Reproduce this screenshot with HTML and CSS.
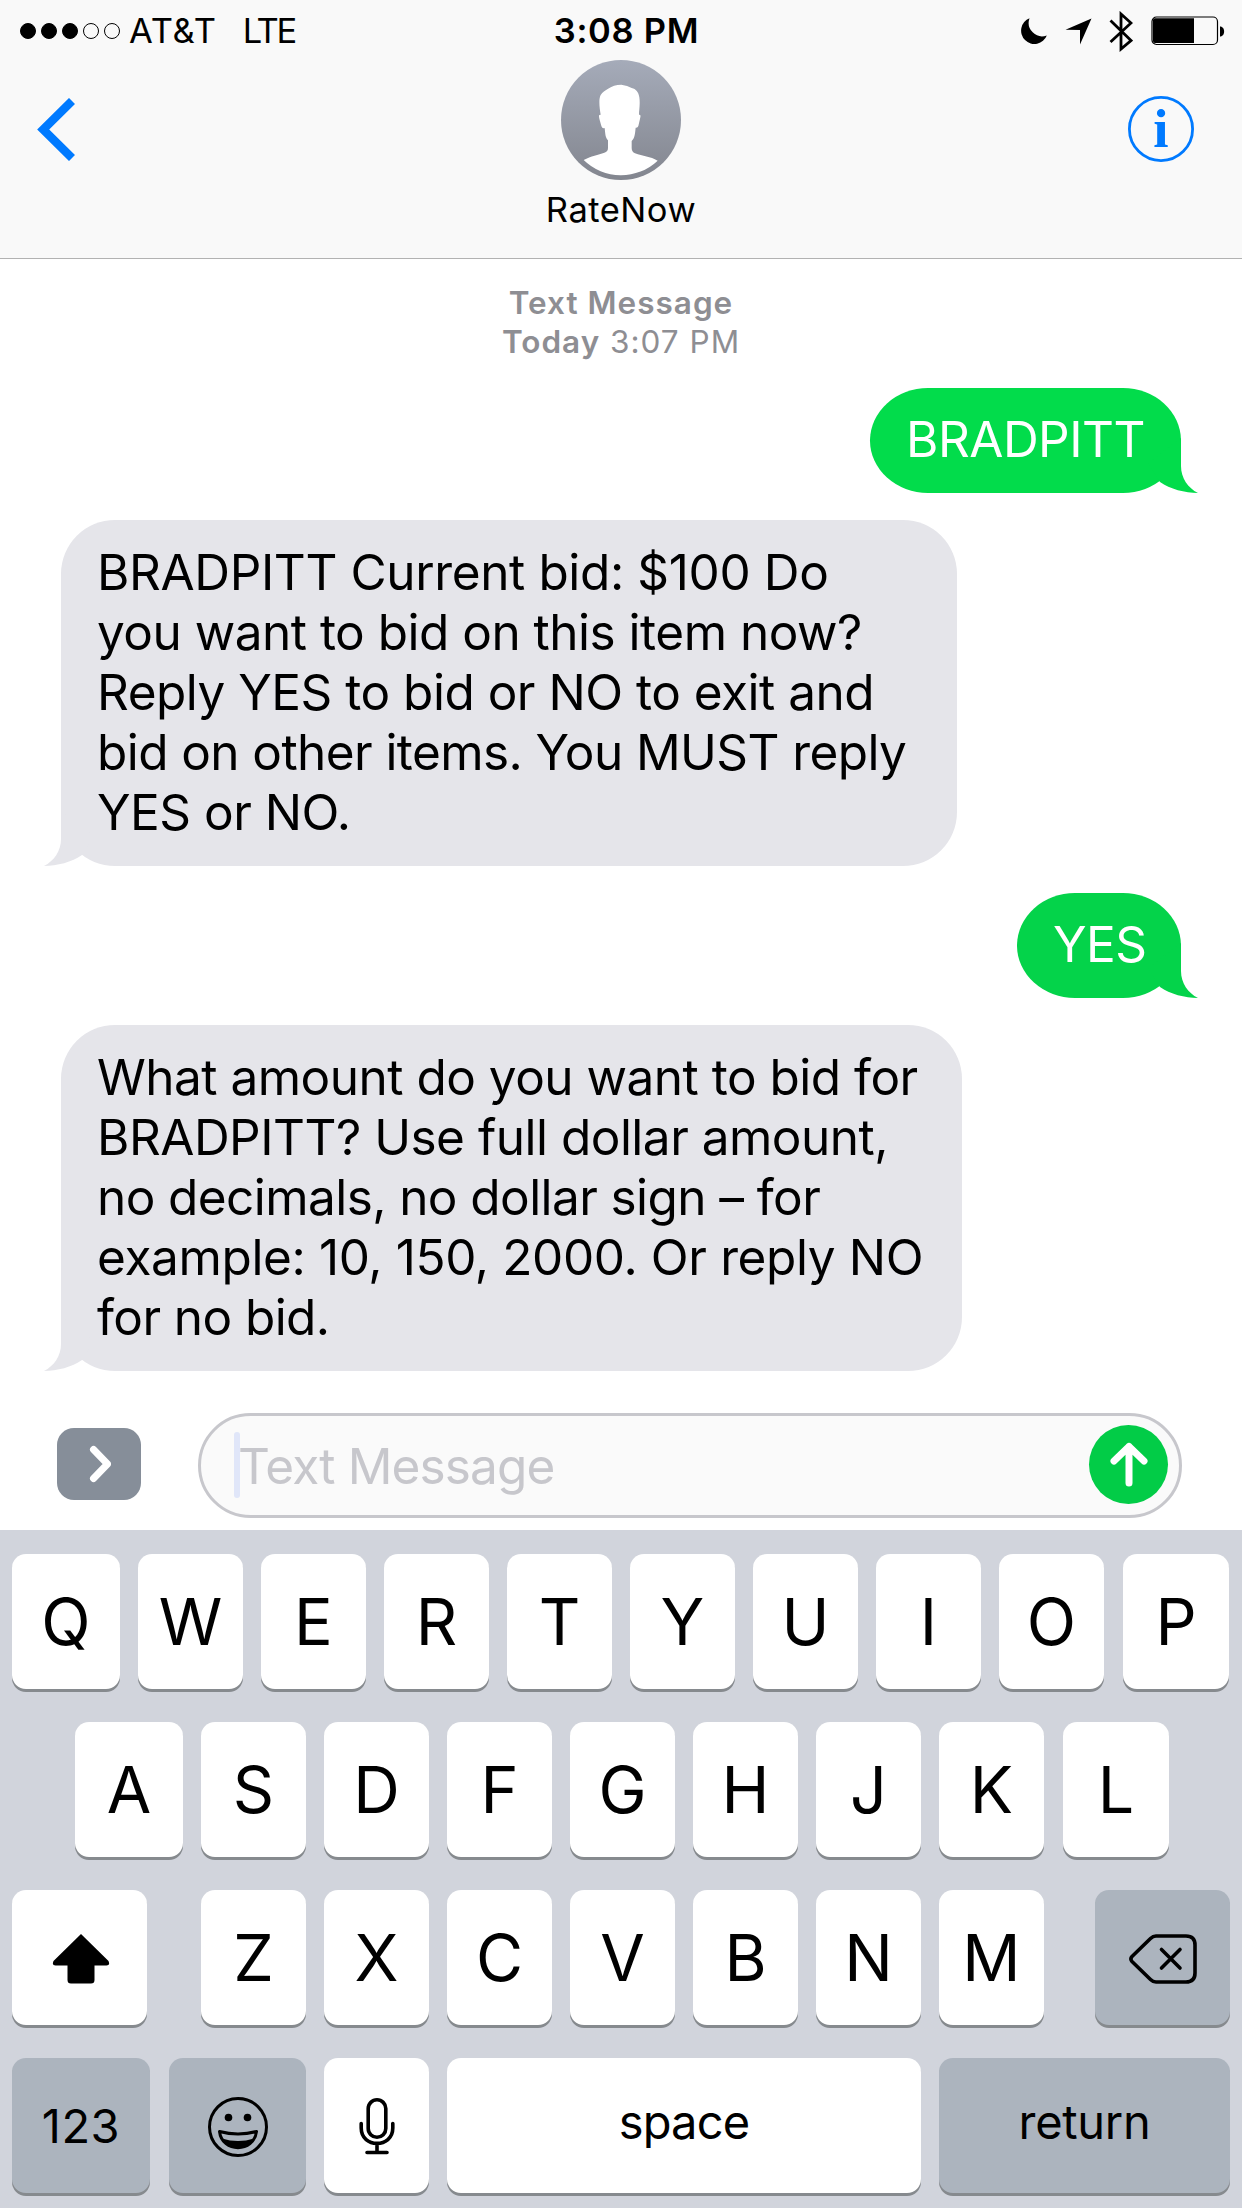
FILE: index.html
```html
<!doctype html>
<html lang="en">

<head>
  <title>RateNow</title>
  <meta charset="utf-8">
  <meta name="viewport" content="width=device-width, initial-scale=1">
  <link rel="stylesheet" href="styles.css">
</head>

<body>
  <header class="header">
    <div class="status-bar">
      <div class="status-left">
        <div class="signal"><i class="dot full"></i><i class="dot full"></i><i class="dot full"></i><i class="dot"></i><i class="dot"></i></div>
        <span class="carrier">AT&amp;T</span>
        <span class="network">LTE</span>
      </div>
      <span class="clock">3:08 PM</span>
      <div class="status-right">
        <svg class="moon" width="27" height="27" viewBox="0 0 27 27"><path d="M9.500 .3A13.300 13.300 0 1 0 26.800 17.500A13.500 13.500 0 0 1 9.500 .3Z"/></svg>
        <svg class="location" width="27" height="27" viewBox="0 0 27 27"><path d="M26.500 .5L15 26.500V12L.5 11.700Z"/></svg>
        <svg class="bluetooth" width="24" height="41" viewBox="0 0 24 41"><path d="M1.500 9.500L22 29.500L12 38V3L22 12L1.500 31"/></svg>
        <svg class="battery" width="74" height="30" viewBox="0 0 74 30">
          <rect x="1" y="1" width="65.500" height="27.500" rx="4.500" fill="none" stroke="#000" stroke-width="1.200"/>
          <path d="M4 2.300H43V27H4Q2 27 2 25V4.300Q2 2.300 4 2.300Z"/>
          <path d="M69 10.500C74.500 10.500 74.500 20.500 69 20.500Z"/>
        </svg>
      </div>
    </div>
    <div class="nav">
      <svg class="back" width="38" height="63" viewBox="0 0 38 63"><path d="M35 3L6.200 31.500L35 60"/></svg>
      <div class="contact">
        <svg class="avatar" width="120" height="120" viewBox="0 0 360 360">
          <defs>
            <linearGradient id="avatarFill" x1="0" y1="0" x2="0" y2="1">
              <stop offset="0" stop-color="#a5abb9"/>
              <stop offset="1" stop-color="#83868f"/>
            </linearGradient>
          </defs>
          <circle cx="180" cy="180" r="180" fill="url(#avatarFill)"/>
          <path fill="#fff" d="M68 300C90 288 112 285 130 278Q141 275 141 264V241C133 233 133 222 131 204Q123 207 120 194C116 180 112 168 115 165L119 164C116 145 112 118 119 105C125 95 132 93 140 87Q158 74 181 74Q200 76 212 84C225 87 232 95 235 112C238 132 234 150 234 164Q240 163 238 172C236 182 234 190 232 198Q230 204 224 203C222 220 222 233 212 243V264Q212 276 222 280C245 288 268 290 290 302A160 160 0 0 1 68 300Z"/>
        </svg>
        <span class="contact-name">RateNow</span>
      </div>
      <svg class="info" width="66" height="66" viewBox="0 0 66 66">
        <circle cx="33" cy="33" r="31.600"/>
        <text x="33" y="51" text-anchor="middle">i</text>
      </svg>
    </div>
  </header>

  <main class="thread">
    <div class="meta"><b>Text Message</b><br><b>Today</b> 3:07 PM</div>

    <div class="bubble sent">
      BRADPITT
      <svg class="tail" width="50" height="50" viewBox="0 0 50 50"><path d="M33 -5V23C33 35 40 45 50 50C37 50 22 46 12 39L0 20Z"/></svg>
    </div>

    <div class="bubble received">
      <span class="loose">BRADPITT Current bid: $100 Do</span><br>
      you want to bid on this item now?<br>
      Reply YES to bid or NO to exit and<br>
      <span class="tight">bid on other items. You MUST reply</span><br>
      YES or NO.
      <svg class="tail" width="50" height="50" viewBox="0 0 50 50"><path d="M33 -5V23C33 35 40 45 50 50C37 50 22 46 12 39L0 20Z"/></svg>
    </div>

    <div class="bubble sent latest">
      YES
      <svg class="tail" width="50" height="50" viewBox="0 0 50 50"><path d="M33 -5V23C33 35 40 45 50 50C37 50 22 46 12 39L0 20Z"/></svg>
    </div>

    <div class="bubble received wide">
      What amount do you want to bid for<br>
      BRADPITT? Use full dollar amount,<br>
      <span class="tight">no decimals, no dollar sign – for</span><br>
      <span class="loose">example: 10, 150, 2000. Or reply NO</span><br>
      <span class="tight">for no bid.</span>
      <svg class="tail" width="50" height="50" viewBox="0 0 50 50"><path d="M33 -5V23C33 35 40 45 50 50C37 50 22 46 12 39L0 20Z"/></svg>
    </div>
  </main>

  <div class="compose">
    <div class="apps">
      <svg width="22" height="40" viewBox="0 0 22 40"><path d="M4.500 5.500L18.500 20L4.500 34.500"/></svg>
    </div>
    <div class="field">
      <i class="caret"></i>
      <span class="placeholder">Text Message</span>
      <div class="send">
        <svg width="40" height="46" viewBox="0 0 40 46"><path d="M20 4.500V41M5 19L20 4.500L35 19"/></svg>
      </div>
    </div>
  </div>

  <div class="keyboard">
    <div class="row">
      <div class="key edge">Q</div>
      <div class="key">W</div>
      <div class="key">E</div>
      <div class="key">R</div>
      <div class="key">T</div>
      <div class="key">Y</div>
      <div class="key">U</div>
      <div class="key">I</div>
      <div class="key">O</div>
      <div class="key edge">P</div>
    </div>
    <div class="row inset">
      <div class="key edge">A</div>
      <div class="key">S</div>
      <div class="key">D</div>
      <div class="key">F</div>
      <div class="key">G</div>
      <div class="key">H</div>
      <div class="key">J</div>
      <div class="key">K</div>
      <div class="key edge">L</div>
    </div>
    <div class="row">
      <div class="key shift">
        <svg width="58" height="50" viewBox="0 0 58 50"><path d="M29 0L56.500 27Q58.500 31.500 54.500 31.500H42.500V46Q42.500 49.500 39 49.500H19Q15.500 49.500 15.500 46V31.500H3.500Q-.5 31.500 1.500 27Z"/></svg>
      </div>
      <div class="key">Z</div>
      <div class="key">X</div>
      <div class="key">C</div>
      <div class="key">V</div>
      <div class="key">B</div>
      <div class="key">N</div>
      <div class="key">M</div>
      <div class="key dark delete">
        <svg width="68" height="50" viewBox="0 0 68 50"><path d="M27 2H57Q66 2 66 11V39Q66 48 57 48H27Q24 48 21.500 45.500L3 27.500Q.8 25 3 22.500L21.500 4.500Q24 2 27 2Z"/><path d="M32.500 15.500L51 34M51 15.500L32.500 34"/></svg>
      </div>
    </div>
    <div class="row">
      <div class="key dark numbers">123</div>
      <div class="key dark emoji">
        <svg width="60" height="60" viewBox="0 0 60 60">
          <circle cx="30" cy="30" r="28.500"/>
          <circle class="eye" cx="20.500" cy="20.500" r="3.800"/>
          <circle class="eye" cx="39.500" cy="20.500" r="3.800"/>
          <path d="M11.500 34.500Q30 39.500 48.500 34.500C46 56 14 56 11.500 34.500Z"/>
          <path class="mouth" d="M14 41.500Q30 46.500 46 41.500C40 53.500 20 53.500 14 41.500Z"/>
        </svg>
      </div>
      <div class="key mic">
        <svg width="36" height="57" viewBox="0 0 36 57"><rect x="9.200" y="1.800" width="17.600" height="37.500" rx="8.800"/><path d="M2.200 25.500V30C2.200 50.500 33.800 50.500 33.800 30V25.500M18 46V54.500M8 54.500H28"/></svg>
      </div>
      <div class="key word space">space</div>
      <div class="key dark word return">return</div>
    </div>
  </div>
</body>

</html>
```
FILE: styles.css
```css
* {
  box-sizing: border-box;
}

body {
  margin: 0;
  width: 1242px;
  height: 2208px;
  display: flex;
  flex-direction: column;
  overflow: hidden;
  background: #fff;
  color: #000;
  font-family: Inter, "Liberation Sans", sans-serif;
}

svg {
  display: block;
  flex-shrink: 0;
}

/* Header */
.header {
  height: 259px;
  background: #f9f9f9;
  border-bottom: 1px solid #b2b2b2;
}

.status-bar {
  height: 60px;
  padding: 0 17px 0 20px;
  display: grid;
  grid-template-columns: 1fr auto 1fr;
  align-items: center;
  font-size: 34.5px;
  line-height: 62px;
}

.status-left,
.status-right {
  display: flex;
  align-items: center;
}

.status-right {
  justify-content: flex-end;
}

.signal {
  display: flex;
  gap: 5px;
  margin-right: 9px;
}

.dot {
  width: 16px;
  height: 16px;
  border: 1px solid #000;
  border-radius: 50%;
}

.dot.full {
  background: #000;
}

.carrier {
  letter-spacing: 0.8px;
}

.network {
  margin-left: 26px;
  letter-spacing: -2.3px;
}

.clock {
  margin-left: 8px;
  font-weight: 600;
  letter-spacing: 0.7px;
}

.location {
  margin-left: 18px;
}

.bluetooth {
  margin-left: 17px;
  fill: none;
  stroke: #000;
  stroke-width: 2.8;
}

.battery {
  margin-left: 18px;
}

.nav {
  height: 198px;
  padding: 0 48px;
  display: grid;
  grid-template-columns: 1fr auto 1fr;
  align-items: start;
}

.back {
  margin: 38px 0 0 -11px;
  fill: none;
  stroke: #007aff;
  stroke-width: 8.5;
}

.contact {
  display: flex;
  flex-direction: column;
  align-items: center;
}

.contact-name {
  margin-top: 9px;
  font-size: 34.5px;
  line-height: 42px;
  letter-spacing: 0.5px;
}

.info {
  margin-top: 36px;
  justify-self: end;
  fill: none;
  stroke: #007aff;
  stroke-width: 2.8;
}

.info text {
  fill: #007aff;
  stroke: none;
  font: bold 55px "Liberation Serif", serif;
}

/* Messages */
.thread {
  height: 1112px;
  padding: 24px 61px 0;
  display: flex;
  flex-direction: column;
  gap: 27px;
}

.meta {
  text-align: center;
  color: #8e8e93;
  font-size: 31.5px;
  line-height: 39px;
  letter-spacing: 1px;
}

.meta b {
  font-weight: 600;
}

.bubble {
  position: relative;
  padding: 22px 36px 24px;
  border-radius: 54px;
  font-size: 49.5px;
  line-height: 60px;
  letter-spacing: -0.5px;
  white-space: nowrap;
}

.loose {
  letter-spacing: -0.37px;
}

.tight {
  letter-spacing: -0.58px;
}

.sent {
  align-self: flex-end;
  width: 311px;
  height: 105px;
  padding-top: 21px;
  border-radius: 58px / 52.5px;
  background: #02dc4b;
  fill: #02dc4b;
  color: #fff;
}

.sent.latest {
  width: 164px;
  background: #04d34a;
  fill: #04d34a;
}

.received {
  align-self: flex-start;
  width: 896px;
  height: 346px;
  background: #e5e5ea;
  fill: #e5e5ea;
}

.received.wide {
  width: 901px;
}

.tail {
  position: absolute;
  right: -17px;
  bottom: 0;
  overflow: visible;
}

.received .tail {
  right: auto;
  left: -17px;
  transform: scaleX(-1);
}

/* Compose bar */
.compose {
  height: 159px;
  padding: 42px 60px 12px 57px;
  display: flex;
  align-items: center;
  gap: 57px;
}

.apps {
  width: 84px;
  height: 72px;
  margin-bottom: 3px;
  padding-left: 2px;
  display: flex;
  align-items: center;
  justify-content: center;
  border-radius: 17px;
  background: #868e99;
}

.apps svg,
.send svg {
  fill: none;
  stroke: #fff;
  stroke-width: 7;
  stroke-linecap: round;
  stroke-linejoin: round;
}

.field {
  flex: 1;
  height: 105px;
  padding: 0 11px 2px 33px;
  display: flex;
  align-items: center;
  border: 3px solid #c7c7cc;
  border-radius: 52.5px;
  background: #fafafa;
}

.caret {
  width: 6px;
  height: 66px;
  border-radius: 3px;
  background: #e0e6f9;
}

.placeholder {
  margin: 2px 0 0 -2px;
  flex: 1;
  color: #c7c7cc;
  font-size: 49.5px;
  line-height: 60px;
  letter-spacing: -0.85px;
}

.send {
  width: 79px;
  height: 79px;
  display: flex;
  align-items: center;
  justify-content: center;
  border-radius: 50%;
  background: #02cc47;
}

/* Keyboard */
.keyboard {
  flex: 1;
  padding: 24px 12px 0;
  display: flex;
  flex-direction: column;
  gap: 33px;
  background: #d1d4dc;
}

.row {
  display: flex;
  gap: 18px;
}

.inset {
  padding-left: 63px;
}

.key {
  width: 105px;
  height: 135px;
  padding-top: 2px;
  display: flex;
  align-items: center;
  justify-content: center;
  border-radius: 14px;
  background: #fff;
  box-shadow: 0 3px 0 #868a8e;
  font-size: 64.5px;
  line-height: 133px;
}

.edge {
  width: 108px;
}

.edge:last-child {
  width: 106px;
  margin-left: 1px;
}

.dark {
  background: #acb4be;
}

.shift {
  width: 135px;
  margin-right: 36px;
  padding: 3px 0 0 3px;
}

.delete {
  width: 135px;
  margin-left: 33px;
  padding-top: 3px;
}

.delete svg,
.emoji svg,
.mic svg {
  fill: none;
  stroke: #000;
  stroke-width: 3.6;
  stroke-linecap: round;
  stroke-linejoin: round;
}

.emoji svg {
  stroke-width: 3;
}

.emoji .eye,
.emoji .mouth {
  fill: #000;
  stroke: none;
}

.numbers {
  width: 138px;
  padding-top: 0;
  font-size: 47px;
  letter-spacing: 0.5px;
}

.emoji {
  width: 137px;
  margin-left: 1px;
}

.word {
  padding: 0 0 8px;
  font-size: 47px;
  letter-spacing: -0.3px;
}

.space {
  width: 474px;
  letter-spacing: -0.8px;
}

.return {
  width: 291px;
}
```
